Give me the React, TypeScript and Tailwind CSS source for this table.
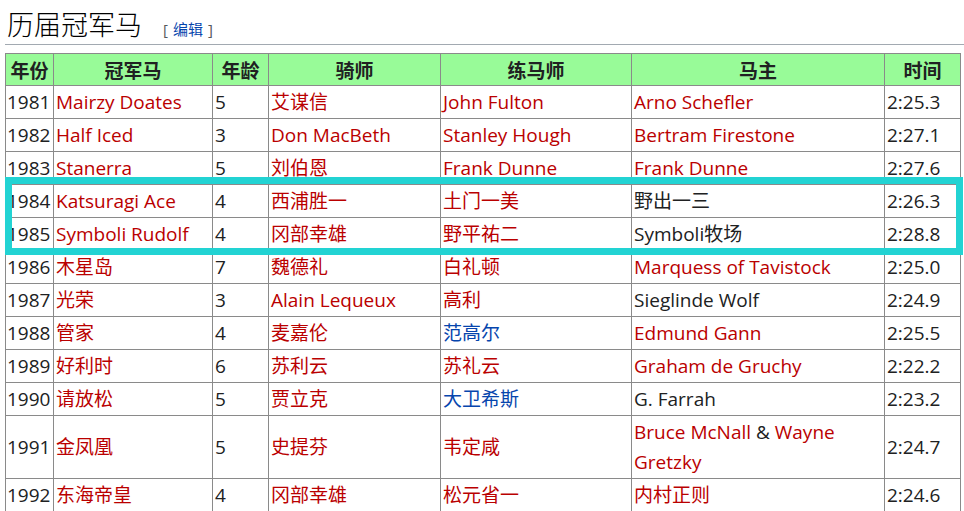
import React from "react";

type Cell = { t: React.ReactNode; c?: "r" | "b" | "k" };

const R = "text-[#ba0000]";
const B = "text-[#0645ad]";
const K = "text-[#202122]";

const rows: Cell[][] = [
  [{ t: "1981" }, { t: "Mairzy Doates", c: "r" }, { t: "5" }, { t: "艾谋信", c: "r" }, { t: "John Fulton", c: "r" }, { t: "Arno Schefler", c: "r" }, { t: "2:25.3" }],
  [{ t: "1982" }, { t: "Half Iced", c: "r" }, { t: "3" }, { t: "Don MacBeth", c: "r" }, { t: "Stanley Hough", c: "r" }, { t: "Bertram Firestone", c: "r" }, { t: "2:27.1" }],
  [{ t: "1983" }, { t: "Stanerra", c: "r" }, { t: "5" }, { t: "刘伯恩", c: "r" }, { t: "Frank Dunne", c: "r" }, { t: "Frank Dunne", c: "r" }, { t: "2:27.6" }],
  [{ t: "1984" }, { t: "Katsuragi Ace", c: "r" }, { t: "4" }, { t: "西浦胜一", c: "r" }, { t: "土门一美", c: "r" }, { t: "野出一三", c: "k" }, { t: "2:26.3" }],
  [{ t: "1985" }, { t: "Symboli Rudolf", c: "r" }, { t: "4" }, { t: "冈部幸雄", c: "r" }, { t: "野平祐二", c: "r" }, { t: "Symboli牧场", c: "k" }, { t: "2:28.8" }],
  [{ t: "1986" }, { t: "木星岛", c: "r" }, { t: "7" }, { t: "魏德礼", c: "r" }, { t: "白礼顿", c: "r" }, { t: "Marquess of Tavistock", c: "r" }, { t: "2:25.0" }],
  [{ t: "1987" }, { t: "光荣", c: "r" }, { t: "3" }, { t: "Alain Lequeux", c: "r" }, { t: "高利", c: "r" }, { t: "Sieglinde Wolf", c: "k" }, { t: "2:24.9" }],
  [{ t: "1988" }, { t: "管家", c: "r" }, { t: "4" }, { t: "麦嘉伦", c: "r" }, { t: "范高尔", c: "b" }, { t: "Edmund Gann", c: "r" }, { t: "2:25.5" }],
  [{ t: "1989" }, { t: "好利时", c: "r" }, { t: "6" }, { t: "苏利云", c: "r" }, { t: "苏礼云", c: "r" }, { t: "Graham de Gruchy", c: "r" }, { t: "2:22.2" }],
  [{ t: "1990" }, { t: "请放松", c: "r" }, { t: "5" }, { t: "贾立克", c: "r" }, { t: "大卫希斯", c: "b" }, { t: "G. Farrah", c: "k" }, { t: "2:23.2" }],
  [
    { t: "1991" },
    { t: "金凤凰", c: "r" },
    { t: "5" },
    { t: "史提芬", c: "r" },
    { t: "韦定咸", c: "r" },
    {
      t: (
        <>
          <span className={R}>Bruce McNall</span>
          <span className={K}> &amp; </span>
          <span className={R}>Wayne</span>
          <br />
          <span className={R}>Gretzky</span>
        </>
      ),
    },
    { t: "2:24.7" },
  ],
  [{ t: "1992" }, { t: "东海帝皇", c: "r" }, { t: "4" }, { t: "冈部幸雄", c: "r" }, { t: "松元省一", c: "r" }, { t: "内村正则", c: "r" }, { t: "2:24.6" }],
];

const heads = ["年份", "冠军马", "年龄", "骑师", "练马师", "马主", "时间"];
const widths = [48, 159, 56, 172, 191, 253, 76];

export default function App() {
  return (
    <div
      className="relative w-[964px] h-[511px] overflow-hidden bg-white text-[#202122]"
      style={{ fontFamily: '"Open Sans", "Noto Sans CJK SC", sans-serif' }}
    >
      <div className="ml-[5px] h-[45px] flex items-end border-b border-[#a2a9b1] pb-[1px]">
        <span
          className="text-[27px] leading-[38px] font-light text-black pl-[2px]"
          style={{ fontFamily: '"Noto Sans CJK SC", sans-serif' }}
        >
          历届冠军马
        </span>
        <span className="ml-[21px] mb-[4px] text-[15px] leading-[20px] text-[#54595d]">
          [<span className="mx-[5px] text-[#0645ad]" style={{ fontFamily: '"Noto Sans CJK SC", sans-serif' }}>编辑</span>]
        </span>
      </div>
      <table className="ml-[5px] mt-[8px] table-fixed border-collapse text-[19px]">
        <colgroup>
          {widths.map((w, i) => (
            <col key={i} style={{ width: w }} />
          ))}
        </colgroup>
        <thead>
          <tr>
            {heads.map((h) => (
              <th
                key={h}
                className="border border-[#8a8a8a] bg-[#98fb98] px-[3px] py-[1px] text-[19px] leading-[29px] text-center font-bold text-[#202122]"
                style={{ fontFamily: '"Noto Sans CJK SC", sans-serif' }}
              >
                {h}
              </th>
            ))}
          </tr>
        </thead>
        <tbody>
          {rows.map((r, ri) => (
            <tr key={ri}>
              {r.map((cell, ci) => (
                <td
                  key={ci}
                  className={`border border-[#8a8a8a] py-[1px] leading-[30px] align-middle whitespace-nowrap ${
                    ci === 0 ? "pl-[1px] pr-0" : "px-[2px]"
                  } ${cell.c === "r" ? R : cell.c === "b" ? B : K}`}
                >
                  {cell.t}
                </td>
              ))}
            </tr>
          ))}
        </tbody>
      </table>
      <div className="absolute left-[5px] top-[177px] w-[958px] h-[78px] border-[7px] border-[#22d3d3] pointer-events-none" />
    </div>
  );
}
